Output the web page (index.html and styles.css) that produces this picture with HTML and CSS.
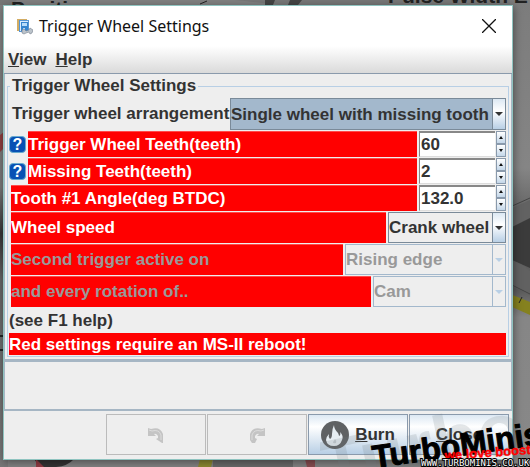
FILE: index.html
```
<!DOCTYPE html>
<html lang="en">
<head>
    <meta charset="UTF-8">
    <meta name="viewport" content="width=device-width, initial-scale=1.0">
    <title>Trigger Wheel Settings</title>
    <link rel="stylesheet" href="styles.css">
</head>
<body>
    <!-- dashboard behind the dialog -->
    <svg class="backdrop" viewBox="0 0 530 467" preserveAspectRatio="none" aria-hidden="true">
      <defs>
        <linearGradient id="side" x1="0" y1="0" x2="0" y2="1">
          <stop offset="0" stop-color="#7c7c7c"/>
          <stop offset="0.36" stop-color="#858585"/>
          <stop offset="0.44" stop-color="#696969"/>
          <stop offset="0.62" stop-color="#5a5a5a"/>
          <stop offset="0.68" stop-color="#868686"/>
          <stop offset="1" stop-color="#888"/>
        </linearGradient>
        <linearGradient id="left" x1="0" y1="0" x2="0" y2="1">
          <stop offset="0" stop-color="#808080"/>
          <stop offset="0.4" stop-color="#777"/>
          <stop offset="0.5" stop-color="#353535"/>
          <stop offset="0.6" stop-color="#666"/>
          <stop offset="1" stop-color="#777"/>
        </linearGradient>
      </defs>
      <rect width="530" height="467" fill="#808080"/>
      <rect width="8" height="467" fill="url(#left)"/>
      <path d="M0 135l4-3v16l-4 4z" fill="#8b3d3d"/>
      <path d="M0 336h4M0 350h4" stroke="#222" stroke-width="2"/>
      <rect x="510" width="20" height="467" fill="url(#side)"/>
      <path d="M510 209l20-9v18l-20 10z" fill="#626262"/>
      <path d="M510 228l20-10v50l-20-9z" fill="#3b3b3b"/>
      <path d="M510 261q12 2 20 10v24l-20-10z" fill="#616161"/>
      <path d="M510 207l20-9M510 284l20 10" stroke="#444" fill="none"/>
      <path d="M510 294l20 8v13l-20-9z" fill="#85811f"/>
      <path d="M519 303l3-6" stroke="#222" stroke-width="1"/>
      <path d="M0 0h17l-5 5H0zM235 0h275v5H280z" fill="#444" opacity="0.15"/>
      <path d="M265 0h10l-2 5h-8zM290 0h12l-4 5h-10z" fill="#444"/>
      <path d="M200 4l7-3" stroke="#222"/>
      <path d="M34 459h40q-6 7-18 8H40z" fill="#333"/>
      <path d="M36 459l8 8h-8z" fill="#8f3a42"/>
      <path d="M200 459h13l-2 8h-13z" fill="#8b8730"/>
      <path d="M213 459h80v8h-80z" fill="#686868"/>
      <path d="M305 459h10v8h-8z" fill="#874c50"/>
      <text x="11" y="16" class="backdrop-label">Position</text>
      <text x="388" y="3" class="backdrop-label">Pulse Width E</text>
    </svg>

    <main class="dialog">
      <header class="titlebar">
        <svg class="app-icon" viewBox="0 0 17 17" aria-hidden="true">
          <path d="M1 1h10v12H1z" fill="#d3ad64"/>
          <path d="M3 2h10v12H3z" fill="#5796d4"/>
          <path d="M4 3h8v10H4z" fill="#d9ecff"/>
          <path d="M5 4h7v9H5z" fill="#3584ce"/>
          <path d="M6 5h5v3H6zM7 10h2v2H7z" fill="#b8dcfa"/>
          <path d="M6 12l2-1 2 2 3-1 1-2 3 2-1 3-2 1-1-2-3 1-2 1-2-1z" fill="#bcc4cb" stroke="#77828e" stroke-width="0.6"/>
        </svg>
        <h1 class="title">Trigger Wheel Settings</h1>
        <button class="close-x" aria-label="Close window">
          <svg viewBox="0 0 14 14"><path d="M0 0l14 14M14 0L0 14" stroke="#111" stroke-width="1.3"/></svg>
        </button>
      </header>
      <nav class="menubar">
        <button class="menu"><u>V</u>iew</button>
        <button class="menu"><u>H</u>elp</button>
      </nav>

      <form class="panel">
        <fieldset class="settings">
          <legend>Trigger Wheel Settings</legend>
          <div class="row arrangement">
            <label class="plain" for="arrangement">Trigger wheel arrangement</label>
            <div class="combo focused">
              <select id="arrangement"><option>Single wheel with missing tooth</option></select>
            </div>
          </div>
          <div class="row number">
            <button type="button" class="help" aria-label="Help">?</button>
            <label class="red" for="teeth">Trigger Wheel Teeth(teeth)</label>
            <div class="spinner">
              <input type="text" id="teeth" value="60">
              <div class="steps"><button type="button" class="up" aria-label="Increase"></button><button type="button" class="down" aria-label="Decrease"></button></div>
            </div>
          </div>
          <div class="row number">
            <button type="button" class="help" aria-label="Help">?</button>
            <label class="red" for="missing">Missing Teeth(teeth)</label>
            <div class="spinner">
              <input type="text" id="missing" value="2">
              <div class="steps"><button type="button" class="up" aria-label="Increase"></button><button type="button" class="down" aria-label="Decrease"></button></div>
            </div>
          </div>
          <div class="row number indent">
            <label class="red" for="angle">Tooth #1 Angle(deg BTDC)</label>
            <div class="spinner">
              <input type="text" id="angle" value="132.0">
              <div class="steps"><button type="button" class="up" aria-label="Increase"></button><button type="button" class="down" aria-label="Decrease"></button></div>
            </div>
          </div>
          <div class="row indent">
            <label class="red" for="speed">Wheel speed</label>
            <div class="combo speed">
              <select id="speed"><option>Crank wheel</option></select>
            </div>
          </div>
          <div class="row indent">
            <label class="red off" for="edge">Second trigger active on</label>
            <div class="combo disabled edge">
              <select id="edge" disabled><option>Rising edge</option></select>
            </div>
          </div>
          <div class="row indent">
            <label class="red off" for="rotation">and every rotation of..</label>
            <div class="combo disabled rotation">
              <select id="rotation" disabled><option>Cam</option></select>
            </div>
          </div>
          <p class="note">(see F1 help)</p>
          <p class="note warning">Red settings require an MS-II reboot!</p>
        </fieldset>
      </form>

      <div class="messages"></div>

      <footer class="actions">
        <button class="action" disabled aria-label="Undo">
          <svg class="arrow" viewBox="0 0 16 16"><path d="M0 1l3 1q9-3 12 5v9h-1l-6-4 2-1V9q-2-3-4-2l2 2H0z" fill="#c4c4c4"/><path d="M1 3l3 1q7-2 9 4v5" fill="none" stroke="#dcdcdc"/></svg>
        </button>
        <button class="action" disabled aria-label="Redo">
          <svg class="arrow" viewBox="0 0 16 16"><path d="M16 1l-3 1Q4-1 1 7v6l2 3h3l2-4-2-1V9q2-3 4-2L8 9h8z" fill="#c4c4c4"/><path d="M15 3l-3 1Q5 2 3 8v5" fill="none" stroke="#dcdcdc"/></svg>
        </button>
        <button class="action">
          <svg class="flame" viewBox="0 0 28 28">
            <circle cx="14" cy="14" r="14" fill="#5f6163"/>
            <path d="M13 4q0 4 4 8 1 2 1 3 2-1 1-4 4 4 2 8-2 6-8 6-7 0-8-6 0-3 3-6-1 3 1 5 2-1 2-5 0-5 2-9z" fill="#e6edf2"/>
            <path d="M14 18q2 2 1 4-3 1-3-1 1-1 2-3z" fill="#c6cdd2"/>
          </svg>
          <span><u>B</u>urn</span>
        </button>
        <button class="action"><span><u>C</u>lose</span></button>
      </footer>
    </main>

    <!-- site watermark -->
    <svg class="watermark" viewBox="0 0 210 70" role="img" aria-label="TurboMinis">
      <text x="7" y="96" class="ghost" transform="rotate(-12 7 96)">Turbo</text>
      <text x="54" y="71" class="brand" transform="rotate(-8 54 71)">TurboMinis</text>
      <text x="125" y="63" class="slogan" transform="rotate(-4 125 63)">we love boost</text>
      <text x="101" y="69" class="site">WWW.TURBOMINIS.CO.UK</text>
    </svg>
</body>
</html>
```
FILE: styles.css
```
* {
  margin: 0;
  padding: 0;
  box-sizing: border-box;
}

body {
  min-height: 100vh;
  padding: 5px 17px 7px 3px;
  position: relative;
  overflow: hidden;
  background-color: #808080;
  font-family: "Liberation Sans", Arial, sans-serif;
  font-size: 17px;
  font-weight: bold;
  color: #333;
}

button,
input,
select {
  font: inherit;
  color: inherit;
}

.backdrop {
  position: absolute;
  top: 0;
  left: 0;
  width: 100%;
  height: 100%;
}

.backdrop-label {
  font-size: 21px;
  fill: #222;
}

.dialog {
  position: relative;
  background-color: #eee;
  border: 1px solid #8fc4c0;
  box-shadow: 1px 2px 8px rgba(0, 0, 0, 0.4);
}

/* title and menu */
.titlebar {
  display: flex;
  align-items: center;
  height: 40px;
  padding: 0 16px 0 12px;
  background-color: #fff;
}

.app-icon {
  width: 17px;
  height: 17px;
}

.title {
  flex: 1;
  margin-left: 6px;
  font-family: "Noto Sans", "Open Sans", sans-serif;
  font-size: 16px;
  font-weight: normal;
  color: #111;
}

.close-x {
  width: 14px;
  height: 14px;
  background: none;
  border: none;
}

.close-x svg {
  display: block;
}

.menubar {
  display: flex;
  gap: 9px;
  height: 28px;
  padding: 0 4px;
  background: linear-gradient(#fff, #dadada);
  border-bottom: 1px solid #8a9aac;
}

.menu {
  background: none;
  border: none;
}

/* settings */
.panel {
  padding: 2px;
  border: 1px solid #a6b6c4;
  border-top: none;
  border-bottom-width: 2px;
}

.settings {
  min-width: 0;
  padding: 0 2px 1px 1px;
  border: 1px solid #b8cfe5;
}

.settings legend {
  margin-left: 1px;
  padding: 0 2px;
  line-height: 20px;
}

.row {
  display: flex;
  gap: 2px;
  height: 31px;
  margin-bottom: 1px;
}

.row.number {
  height: 26px;
}

.row.indent {
  padding-left: 2px;
}

.row.arrangement {
  gap: 0;
  height: 32px;
  margin-top: 2px;
}

.plain {
  flex: 1;
  padding-left: 3px;
  line-height: 32px;
  white-space: nowrap;
}

.red {
  flex: 1;
  display: flex;
  align-items: center;
  background-color: #f00;
  border: 1px solid #ff4a4a;
  border-width: 1px 0 0;
  color: #fff;
  white-space: nowrap;
}

.red.off {
  color: #999;
}

.help {
  align-self: center;
  width: 17px;
  height: 17px;
  background-color: #0850b4;
  border: 1px solid #65a9cf;
  border-radius: 4px;
  color: #fff;
  font-size: 16px;
  line-height: 15px;
}

.combo {
  position: relative;
  width: 118px;
}

.combo.focused {
  width: 276px;
}

.combo.edge {
  width: 161px;
}

.combo.rotation {
  width: 133px;
}

.combo select {
  appearance: none;
  width: 100%;
  height: 100%;
  background-color: #eee;
  border: 1px solid #7a8a99;
  border-radius: 0;
  opacity: 1;
}

.combo::before {
  content: "";
  position: absolute;
  top: 1px;
  right: 1px;
  bottom: 1px;
  width: 12px;
  background: linear-gradient(#dce8f3, #fff 40%, #b8cfe5);
  border-left: 1px solid #7a8a99;
  pointer-events: none;
}

.combo::after {
  content: "";
  position: absolute;
  top: 14px;
  right: 3px;
  border: 4px solid transparent;
  border-top-color: #333;
  border-bottom: none;
  pointer-events: none;
}

.combo.focused select {
  background-color: #a3b8cc;
}

.combo.disabled select {
  border-color: #a3b8cc;
  color: #999;
}

.combo.disabled::before {
  background: #eee;
  border-color: #a3b8cc;
}

.combo.disabled::after {
  border-top-color: #b8cfe5;
}

.spinner {
  display: flex;
  gap: 1px;
  width: 87px;
}

.spinner input {
  flex: 1;
  min-width: 0;
  padding-left: 1px;
  background-color: #fff;
  border: 1px solid #7a8a99;
  border-width: 2px 0 1px 1px;
  border-color: #888 #ddd #ddd #888;
}

.steps {
  display: flex;
  flex-direction: column;
  width: 10px;
}

.steps button {
  flex: 1;
  display: flex;
  align-items: center;
  justify-content: center;
  background: linear-gradient(#fff, #c4d7e9);
  border: 1px solid #8a9aac;
}

.steps button::after {
  content: "";
  border: 2px solid transparent;
}

.steps .up::after {
  border-bottom: 3px solid #111;
  border-top: none;
}

.steps .down::after {
  border-top: 3px solid #111;
  border-bottom: none;
}

.note {
  height: 25px;
  line-height: 26px;
}

.warning {
  height: 22px;
  line-height: 23px;
  background-color: #f00;
  color: #fff;
}

.messages {
  height: 50px;
  border: 1px solid #a6b6c4;
  border-bottom-width: 2px;
}

/* buttons */
.actions {
  display: flex;
  justify-content: flex-end;
  gap: 1px;
  padding: 3px 3px 4px;
}

.action {
  display: flex;
  align-items: center;
  justify-content: center;
  gap: 6px;
  width: 100px;
  height: 41px;
  background: linear-gradient(#dce8f3, #fff 30%, #b8cfe5);
  border: 1px solid #8a9aac;
}

.action:disabled {
  background: #eee;
  border: 1px solid #bbb;
}

.arrow {
  width: 16px;
  height: 16px;
}

.flame {
  width: 28px;
  height: 28px;
}

/* watermark */
.watermark {
  position: absolute;
  right: 0;
  bottom: 0;
  width: 210px;
  height: 70px;
  pointer-events: none;
}

.ghost {
  font-size: 74px;
  fill: rgba(110, 120, 130, 0.18);
}

.brand {
  font-size: 32px;
  fill: #000;
  stroke: #000;
  stroke-width: 1px;
}

.slogan {
  font-size: 13px;
  fill: #f00;
  stroke: #f00;
  stroke-width: 0.4px;
}

.site {
  font-family: "DejaVu Sans Mono", monospace;
  font-size: 9px;
  font-weight: normal;
  fill: #fff;
  stroke: #000;
  stroke-width: 2px;
  paint-order: stroke;
}
```
